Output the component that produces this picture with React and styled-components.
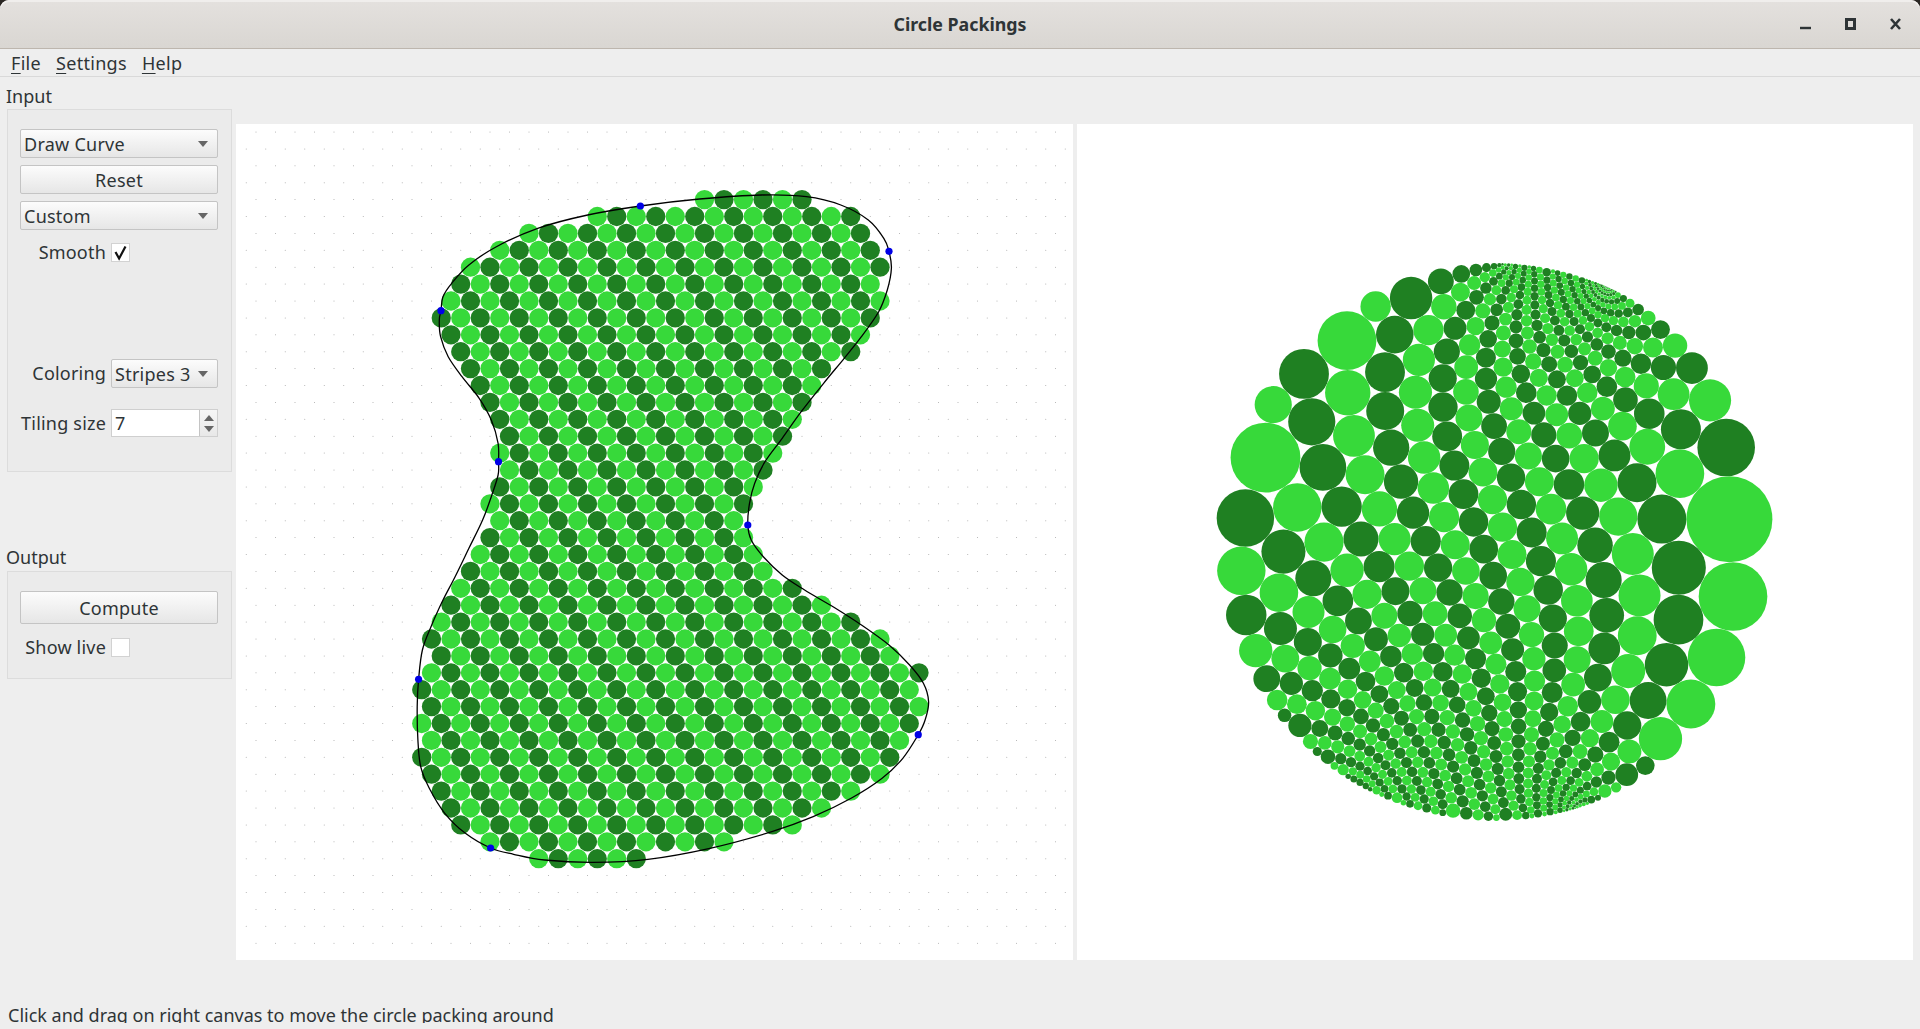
import React from "react";
import styled, { createGlobalStyle } from "styled-components";

const GlobalStyle = createGlobalStyle`
  html, body {
    margin: 0;
    padding: 0;
    background: #2b2723;
  }
  * {
    box-sizing: border-box;
  }
`;

const LIGHT = "#37d93a";
const DARK = "#1f8022";

/* lattice of the tiling, in page pixels */
const STEP = 19.5;
const ROW = 16.9;
const X0 = 724;
const Y0 = 199.6;
const LEFT_W = 837;
const RIGHT_W = 836;
const CANVAS_H = 836;

const latticeX = (i, a) => X0 + STEP * a + (STEP / 2) * i;
const latticeY = (i) => Y0 + ROW * i;
const zx = (x) => 400 + x / 2.904;
const z8 = ([x, y]) => [zx(x), 180 + y / 3];
const z9 = ([x, y]) => [zx(x), 520 + y / 3];

// first and last circle of every row
const ROWS = [
  [885, 1167], [572, 1310], [374, 1338], [289, 1366], [204, 1395],
  [175, 1366], [147, 1395], [119, 1366], [147, 1338], [175, 1310],
  [204, 1224], [232, 1196], [260, 1167], [289, 1138], [317, 1110],
  [289, 1082], [317, 1054], [289, 1026], [260, 997], [289, 970],
  [260, 997], [232, 1026], [204, 1054], [175, 1138], [147, 1224],
  [119, 1310], [90, 1395], [119, 1423], [90, 1507], [62, 1479],
  [90, 1507], [62, 1479], [90, 1450], [62, 1423], [90, 1395],
  [119, 1310], [147, 1224], [175, 1138], [260, 941], [402, 685],
];

const CURVE = [
  ...[
    [119, 392], [125, 350], [150, 310], [200, 255], [280, 200], [400, 145], [545, 105],
    [698, 78], [870, 57], [1050, 45], [1180, 50], [1280, 75], [1360, 120], [1405, 175],
    [1420, 214], [1427, 265], [1415, 330], [1390, 395], [1340, 470], [1290, 535],
    [1230, 610], [1165, 695], [1110, 775], [1060, 845], [1030, 910], [1015, 970],
  ].map(z8),
  ...[
    [1010, 15], [1020, 60], [1055, 110], [1110, 165], [1175, 210], [1260, 262],
    [1340, 315], [1420, 375], [1480, 435], [1520, 490], [1535, 545], [1525, 600],
    [1505, 644], [1460, 715], [1400, 775], [1310, 835], [1200, 890], [1080, 935],
    [900, 985], [720, 1018], [560, 1027], [420, 1020], [330, 1003], [263, 984],
    [190, 940], [130, 880], [85, 805], [60, 740], [52, 660], [50, 560], [54, 478],
    [65, 390], [90, 320], [125, 240], [160, 170], [200, 85], [240, 0],
  ].map(z9),
  ...[
    [265, 950], [285, 885], [286, 845], [285, 790], [265, 720], [230, 655], [180, 590],
    [140, 530], [118, 470], [114, 420],
  ].map(z8),
];

const CONTROL_POINTS = [
  z8([698, 78]), z8([1420, 214]), z8([119, 392]), z8([286, 845]),
  z9([1010, 15]), z9([54, 478]), z9([1505, 644]), z9([263, 984]),
];

function curvePath(points) {
  const n = points.length;
  let d = `M${points[0][0].toFixed(1)} ${points[0][1].toFixed(1)}`;
  for (let i = 0; i < n; i++) {
    const p0 = points[(i - 1 + n) % n];
    const p1 = points[i];
    const p2 = points[(i + 1) % n];
    const p3 = points[(i + 2) % n];
    const c1 = [p1[0] + (p2[0] - p0[0]) / 6, p1[1] + (p2[1] - p0[1]) / 6];
    const c2 = [p2[0] - (p3[0] - p1[0]) / 6, p2[1] - (p3[1] - p1[1]) / 6];
    d += `C${c1[0].toFixed(1)} ${c1[1].toFixed(1)} ${c2[0].toFixed(1)} ${c2[1].toFixed(1)} ${p2[0].toFixed(1)} ${p2[1].toFixed(1)}`;
  }
  return d + "Z";
}

const isDark = (a) => ((a % 2) + 2) % 2 === 0;

function buildVertices() {
  const verts = [];
  const index = new Map();
  ROWS.forEach(([zl, zr], i) => {
    const xl = zx(zl) - 5;
    const xr = zx(zr) + 5;
    for (let a = -60; a < 40; a++) {
      const x = latticeX(i, a);
      if (x >= xl && x <= xr) {
        index.set(`${i},${a}`, verts.length);
        verts.push({ i, a, x, y: latticeY(i), dark: isDark(a) });
      }
    }
  });
  const around = [[0, 1], [1, 0], [1, -1], [0, -1], [-1, 0], [-1, 1]];
  verts.forEach((v) => {
    v.nb = around.map(([di, da]) => {
      const k = index.get(`${v.i + di},${v.a + da}`);
      return k === undefined ? -1 : k;
    });
    v.inner = v.nb.every((k) => k >= 0);
  });
  return verts;
}

/* the circle packing of the tiling in the hyperbolic disk */
function buildPacking(verts) {
  const n = verts.length;
  const s = new Float64Array(n).fill(0.5);
  verts.forEach((v, k) => {
    if (!v.inner) s[k] = 1e-4;
  });
  const angle = (v, u, w) => {
    const uu = u * u;
    const ww = w * w;
    const vv = v * v;
    const q = v * Math.sqrt(((1 - uu) * (1 - ww)) / ((1 - vv * uu) * (1 - vv * ww)));
    return 2 * Math.asin(Math.min(1, q));
  };
  for (let pass = 0; pass < 5000; pass++) {
    let change = 0;
    for (let k = 0; k < n; k++) {
      const vert = verts[k];
      if (!vert.inner) continue;
      const v = s[k];
      let sum = 0;
      for (let j = 0; j < 6; j++) sum += angle(v, s[vert.nb[j]], s[vert.nb[(j + 1) % 6]]);
      const bet = Math.sin(sum / 12);
      let U = (v - bet) / (v * (1 - bet * v));
      if (U < 0) U = 0;
      const t = 1 - U;
      const next = 1 / (t + Math.sqrt(t * t + U));
      change = Math.max(change, Math.abs(next - v));
      s[k] = next;
    }
    if (change < 1e-10) break;
  }

  const re = new Float64Array(n);
  const im = new Float64Array(n);
  const placed = new Uint8Array(n);
  const rho = (a, b) => (1 - s[a] * s[b]) / (1 + s[a] * s[b]);
  const start = verts.findIndex((v) => v.inner && v.nb.every((k) => verts[k].inner));
  placed[start] = 1;
  const first = verts[start].nb[0];
  re[first] = rho(start, first);
  placed[first] = 1;

  const placeAround = (k) => {
    const vert = verts[k];
    const zr = re[k];
    const zi = im[k];
    const j0 = vert.nb.findIndex((m) => m >= 0 && placed[m]);
    if (j0 < 0) return false;
    const u = vert.nb[j0];
    // move k to the origin
    const nr = re[u] - zr;
    const ni = im[u] - zi;
    const dr = 1 - (zr * re[u] + zi * im[u]);
    const di = -(zr * im[u] - zi * re[u]);
    const dd = dr * dr + di * di;
    const start0 = Math.atan2((ni * dr - nr * di) / dd, (nr * dr + ni * di) / dd);
    const put = (m, phi) => {
      if (placed[m]) return;
      const d = rho(k, m);
      const wr = d * Math.cos(phi);
      const wi = d * Math.sin(phi);
      const ar = wr + zr;
      const ai = wi + zi;
      const br = 1 + zr * wr + zi * wi;
      const bi = zr * wi - zi * wr;
      const bb = br * br + bi * bi;
      re[m] = (ar * br + ai * bi) / bb;
      im[m] = (ai * br - ar * bi) / bb;
      placed[m] = 1;
    };
    let phi = start0;
    for (let step = 1; step < 6; step++) {
      const a = vert.nb[(j0 + step - 1) % 6];
      const b = vert.nb[(j0 + step) % 6];
      if (a < 0 || b < 0) break;
      phi += angle(s[k], s[a], s[b]);
      put(b, phi);
    }
    phi = start0;
    for (let step = 1; step < 6; step++) {
      const a = vert.nb[(j0 - step + 1 + 60) % 6];
      const b = vert.nb[(j0 - step + 60) % 6];
      if (a < 0 || b < 0) break;
      phi -= angle(s[k], s[a], s[b]);
      put(b, phi);
    }
    return true;
  };

  const done = new Uint8Array(n);
  for (let round = 0; round < 2; round++) {
    let moved = true;
    while (moved) {
      moved = false;
      for (let k = 0; k < n; k++) {
        if (done[k] || !placed[k] || (round === 0 && !verts[k].inner)) continue;
        if (placeAround(k)) {
          done[k] = 1;
          moved = true;
        }
      }
    }
  }
  return { s, re, im };
}

/* complex helpers for the three point fit */
const cmul = (a, b) => [a[0] * b[0] - a[1] * b[1], a[0] * b[1] + a[1] * b[0]];
const csub = (a, b) => [a[0] - b[0], a[1] - b[1]];
const cadd = (a, b) => [a[0] + b[0], a[1] + b[1]];
const cdiv = (a, b) => {
  const d = b[0] * b[0] + b[1] * b[1];
  return [(a[0] * b[0] + a[1] * b[1]) / d, (a[1] * b[0] - a[0] * b[1]) / d];
};
const toStd = (a, b, c) => {
  const bc = csub(b, c);
  const ba = csub(b, a);
  return [bc, cmul([-1, 0], cmul(a, bc)), ba, cmul([-1, 0], cmul(c, ba))];
};
const matMul = (p, q) => [
  cadd(cmul(p[0], q[0]), cmul(p[1], q[2])),
  cadd(cmul(p[0], q[1]), cmul(p[1], q[3])),
  cadd(cmul(p[2], q[0]), cmul(p[3], q[2])),
  cadd(cmul(p[2], q[1]), cmul(p[3], q[3])),
];
const matInv = (m) => [m[3], cmul([-1, 0], m[1]), cmul([-1, 0], m[2]), m[0]];

const DISK_X = 1494.5;
const DISK_Y = 542;
const DISK_R = 279;

function packedCircles(verts) {
  const { s, re, im } = buildPacking(verts);
  const rowEnd = (i, right) => {
    const row = verts.map((v, k) => ({ v, k })).filter((e) => e.v.i === i);
    return (right ? row[row.length - 1] : row[0]).k;
  };
  const dir = (x, y) => {
    const t = Math.atan2(y - 762.5, x - 770);
    return [Math.cos(t), Math.sin(t)];
  };
  const ideal = (k) => {
    const l = Math.hypot(re[k], im[k]);
    return [re[k] / l, im[k] / l];
  };
  // three boundary circles read off the reference
  const A = rowEnd(19, true);
  const B = rowEnd(16, false);
  const C = rowEnd(22, false);
  const from = toStd(ideal(A), ideal(B), ideal(C));
  const to = toStd(dir(1385, 703), dir(385, 237), dir(122, 953));
  const M = matMul(matInv(to), from);

  return verts.map((v, k) => {
    const z = [re[k], im[k]];
    const w = cdiv(cadd(cmul(M[0], z), M[1]), cadd(cmul(M[2], z), M[3]));
    const t = (1 - s[k]) / (1 + s[k]);
    const mod = w[0] * w[0] + w[1] * w[1];
    const den = 1 - mod * t * t;
    const f = (1 - t * t) / den;
    return {
      cx: DISK_X + DISK_R * w[0] * f,
      cy: DISK_Y + DISK_R * w[1] * f,
      r: (DISK_R * t * (1 - mod)) / den,
      dark: v.dark,
    };
  });
}

const VERTS = buildVertices();
const PACKED = packedCircles(VERTS);
const CURVE_PATH = curvePath(CURVE);

const GRID_DOTS = [];
for (let i = -5; i < 46; i++) {
  for (let a = -80; a < 40; a++) {
    const x = latticeX(i, a);
    const y = latticeY(i);
    if (x > 241 && x < 1068 && y > 128 && y < 950) GRID_DOTS.push([x, y]);
  }
}

const Window = styled.div`
  display: flex;
  flex-direction: column;
  height: 1029px;
  overflow: hidden;
  font-family: "Noto Sans", "Open Sans", sans-serif;
  font-size: 18px;
  color: #2e3436;
`;

const TitleBar = styled.header`
  flex: none;
  height: 49px;
  display: grid;
  grid-template-columns: 1fr auto 1fr;
  align-items: center;
  padding: 0 19px;
  background: linear-gradient(#e4e1de, #d9d6d2);
  border-bottom: 1px solid #bdb6ae;
  border-radius: 9px 9px 0 0;
  box-shadow: inset 0 2px 0 #f0eeec;
`;

const Title = styled.div`
  grid-column: 2;
  font-size: 17.8px;
  font-weight: 700;
  color: #2e3436;
`;

const WindowButtons = styled.div`
  grid-column: 3;
  justify-self: end;
  display: flex;
  align-items: center;
  gap: 34px;
  height: 20px;
`;

const WindowIcon = styled.svg`
  display: block;
  width: 11px;
  height: 12px;
  fill: none;
  stroke: #2e3436;
`;

const Body = styled.div`
  flex: 1;
  display: flex;
  flex-direction: column;
  background: #eeeeee;
`;

const MenuBar = styled.nav`
  flex: none;
  height: 28px;
  display: flex;
  align-items: center;
  gap: 15px;
  padding-left: 11px;
  border-bottom: 1px solid #d9d9d9;
`;

const MenuItem = styled.span`
  line-height: 24px;
  letter-spacing: 0.3px;
`;

const Mnemonic = styled.span`
  text-decoration: underline;
  text-underline-offset: 3px;
`;

const Main = styled.main`
  flex: none;
  height: 928px;
  display: flex;
`;

const Sidebar = styled.aside`
  flex: none;
  width: 236px;
  padding: 8px 0 0 7px;
`;

const GroupLabel = styled.div`
  height: 24px;
  margin-left: -1px;
  line-height: 22px;
  margin-top: ${(p) => p.$top || 0}px;
`;

const GroupBox = styled.section`
  width: 225px;
  height: ${(p) => p.$height}px;
  margin-top: ${(p) => p.$top || 0}px;
  padding: ${(p) => p.$pad}px 13px 0 12px;
  background: #ebebeb;
  border: 1px solid #dcdcdc;
`;

const PushButton = styled.div`
  height: ${(p) => p.$height || 29}px;
  margin-top: ${(p) => p.$top || 0}px;
  display: flex;
  align-items: center;
  justify-content: ${(p) => (p.$combo ? "space-between" : "center")};
  padding: ${(p) => (p.$combo ? "0 9px 0 3px" : "0")};
  background: linear-gradient(#fcfcfc, #e6e6e6);
  border: 1px solid #c4c4c4;
  border-radius: 2px;
  line-height: 1;
  letter-spacing: 0.25px;
`;

const DropArrow = styled.span`
  flex: none;
  width: 0;
  height: 0;
  border-left: 5px solid transparent;
  border-right: 5px solid transparent;
  border-top: 6px solid #666666;
`;

const FormRow = styled.div`
  display: grid;
  grid-template-columns: 86px 107px;
  column-gap: 5px;
  align-items: center;
  margin-top: ${(p) => p.$top || 0}px;
`;

const FormLabel = styled.label`
  justify-self: end;
  white-space: nowrap;
  line-height: 19px;
  letter-spacing: 0.2px;
`;

const CheckBox = styled.span`
  display: block;
  width: 19px;
  height: 19px;
  background: #ffffff;
  border: 1px solid #d2d2d2;
`;

const CheckMark = styled.svg`
  display: block;
  width: 17px;
  height: 17px;
  fill: none;
  stroke: #111111;
`;

const SpinBox = styled.div`
  height: 28px;
  display: flex;
  background: #ffffff;
  border: 1px solid #cfcfcf;
`;

const SpinValue = styled.span`
  flex: 1;
  padding-left: 3px;
  line-height: 26px;
`;

const SpinButtons = styled.div`
  flex: none;
  width: 18px;
  display: flex;
  flex-direction: column;
  align-items: center;
  justify-content: center;
  gap: 5px;
  background: linear-gradient(#f6f6f6, #e8e8e8);
  border-left: 1px solid #c4c4c4;
`;

const SpinArrow = styled.span`
  width: 0;
  height: 0;
  border-left: 5px solid transparent;
  border-right: 5px solid transparent;
  ${(p) => (p.$up ? "border-bottom: 6px solid #666666;" : "border-top: 6px solid #666666;")}
`;

const Canvases = styled.div`
  flex: none;
  display: flex;
  gap: 4px;
  padding-top: 47px;
`;

const Canvas = styled.svg`
  display: block;
  width: ${(p) => p.$width}px;
  height: ${CANVAS_H}px;
  background: #ffffff;
`;

const StatusBar = styled.footer`
  flex: none;
  height: 18px;
  overflow: hidden;
  padding-left: 8px;
  line-height: 20px;
`;

function Combo({ children }) {
  return (
    <PushButton $combo $top={7}>
      <span>{children}</span>
      <DropArrow />
    </PushButton>
  );
}

export default function App() {
  return (
    <>
      <GlobalStyle />
      <Window>
        <TitleBar>
          <Title>Circle Packings</Title>
          <WindowButtons>
            <WindowIcon viewBox="0 0 11 12" strokeWidth="2.4">
              <path d="M0 10h11" />
            </WindowIcon>
            <WindowIcon viewBox="0 0 11 12" strokeWidth="3">
              <path d="M1.5 1.5h8v9h-8z" />
            </WindowIcon>
            <WindowIcon viewBox="0 0 11 12" strokeWidth="2.6">
              <path d="M1 1l9 10M10 1l-9 10" />
            </WindowIcon>
          </WindowButtons>
        </TitleBar>
        <Body>
          <MenuBar>
            <MenuItem><Mnemonic>F</Mnemonic>ile</MenuItem>
            <MenuItem><Mnemonic>S</Mnemonic>ettings</MenuItem>
            <MenuItem><Mnemonic>H</Mnemonic>elp</MenuItem>
          </MenuBar>
          <Main>
            <Sidebar>
              <GroupLabel>Input</GroupLabel>
              <GroupBox $height={363} $pad={12}>
                <Combo>Draw Curve</Combo>
                <PushButton $top={7}>Reset</PushButton>
                <Combo>Custom</Combo>
                <FormRow $top={13}>
                  <FormLabel>Smooth</FormLabel>
                  <CheckBox>
                    <CheckMark viewBox="0 0 17 17" strokeWidth="2.2">
                      <path d="M3.5 8l3.6 6.5L13.5 2.5" />
                    </CheckMark>
                  </CheckBox>
                </FormRow>
                <FormRow $top={97}>
                  <FormLabel>Coloring</FormLabel>
                  <PushButton $combo>
                    <span>Stripes 3</span>
                    <DropArrow />
                  </PushButton>
                </FormRow>
                <FormRow $top={21}>
                  <FormLabel>Tiling size</FormLabel>
                  <SpinBox>
                    <SpinValue>7</SpinValue>
                    <SpinButtons>
                      <SpinArrow $up />
                      <SpinArrow />
                    </SpinButtons>
                  </SpinBox>
                </FormRow>
              </GroupBox>
              <GroupLabel $top={74}>Output</GroupLabel>
              <GroupBox $top={1} $height={108} $pad={19}>
                <PushButton $height={33}>Compute</PushButton>
                <FormRow $top={14}>
                  <FormLabel>Show live</FormLabel>
                  <CheckBox />
                </FormRow>
              </GroupBox>
            </Sidebar>
            <Canvases>
              <Canvas $width={LEFT_W} viewBox={`236 124 ${LEFT_W} ${CANVAS_H}`}>
                {GRID_DOTS.map(([x, y], k) => (
                  <circle key={k} cx={x} cy={y} r="0.5" fill="#a4a4a4" />
                ))}
                {VERTS.map((v, k) => (
                  <circle key={k} cx={v.x} cy={v.y} r="9.65" fill={v.dark ? DARK : LIGHT} />
                ))}
                <path d={CURVE_PATH} fill="none" stroke="#000000" strokeWidth="1.3" />
                {CONTROL_POINTS.map(([x, y], k) => (
                  <circle key={k} cx={x} cy={y} r="3.6" fill="#0000e6" />
                ))}
              </Canvas>
              <Canvas $width={RIGHT_W} viewBox={`1077 124 ${RIGHT_W} ${CANVAS_H}`}>
                {PACKED.map((c, k) => (
                  <circle key={k} cx={c.cx} cy={c.cy} r={c.r} fill={c.dark ? DARK : LIGHT} />
                ))}
              </Canvas>
            </Canvases>
          </Main>
          <StatusBar>Click and drag on right canvas to move the circle packing around</StatusBar>
        </Body>
      </Window>
    </>
  );
}
